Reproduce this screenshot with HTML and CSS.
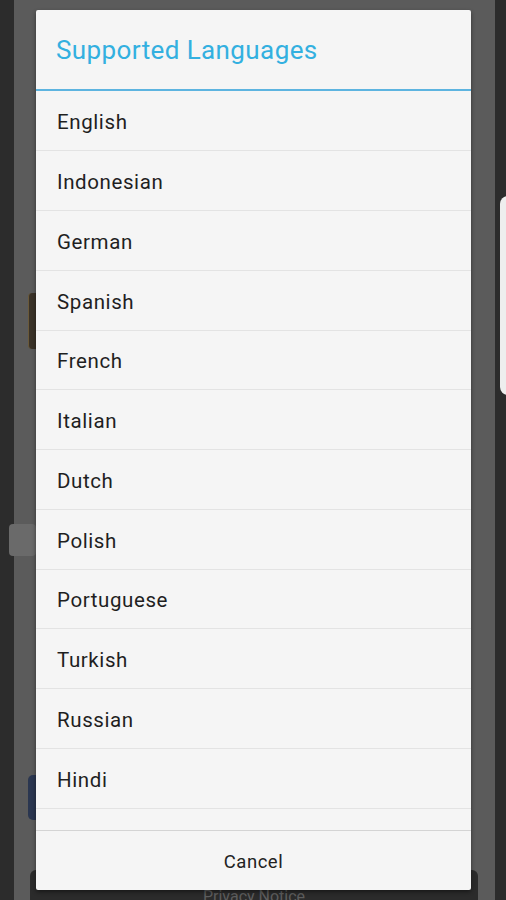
FILE: index.html
```html
<!DOCTYPE html>
<html>
<head>
<meta charset="utf-8">
<link rel="stylesheet" href="styles.css">
</head>
<body>
<div class="frame">
  <div class="screen">
    <div class="bg-bits">
      <span class="bit bit-orange"></span>
      <span class="bit bit-grey"></span>
      <span class="bit bit-blue"></span>
      <div class="bg-bottom"><span class="privacy">Privacy Notice</span></div>
    </div>
    <div class="dialog">
      <div class="title">Supported Languages</div>
      <div class="list">
        <div class="item">English</div>
        <div class="item">Indonesian</div>
        <div class="item">German</div>
        <div class="item">Spanish</div>
        <div class="item">French</div>
        <div class="item">Italian</div>
        <div class="item">Dutch</div>
        <div class="item">Polish</div>
        <div class="item">Portuguese</div>
        <div class="item">Turkish</div>
        <div class="item">Russian</div>
        <div class="item">Hindi</div>
        <div class="item">Chinese</div>
      </div>
      <div class="actions">Cancel</div>
    </div>
  </div>
  <div class="side"><span class="side-card"></span></div>
</div>
</body>
</html>
```
FILE: styles.css
```css
* { box-sizing: border-box; }
html, body { margin: 0; padding: 0; }
body {
  width: 506px;
  height: 900px;
  overflow: hidden;
  background: #2c2c2c;
  font-family: Roboto, "Liberation Sans", sans-serif;
}
.frame {
  display: flex;
  height: 900px;
  padding-left: 14px;
}
.screen {
  position: relative;
  width: 481px;
  height: 900px;
  background: #5b5b5b;
  padding: 10px 0 0 22px;
}
.side {
  position: relative;
  flex: 1;
}
.side-card {
  position: absolute;
  left: 5px;
  top: 196px;
  width: 20px;
  height: 199px;
  background: #eeeeee;
  border-radius: 8px;
}
.bit { position: absolute; }
.bit-orange {
  left: 14px; top: 293px; width: 8px; height: 56px;
  background: #3a3228; border-left: 1px solid #6b5a3a; border-radius: 4px 0 0 4px;
}
.bit-grey {
  left: -5px; top: 524px; width: 27px; height: 32px;
  background: #6a6a6a; border-radius: 4px;
}
.bit-blue {
  left: 14px; top: 775px; width: 10px; height: 45px;
  background: #2a3650; border-radius: 5px 0 0 5px;
}
.bg-bottom {
  position: absolute;
  left: 16px;
  right: 17px;
  top: 870px;
  height: 40px;
  background: #2b2b2b;
  border-radius: 6px;
  text-align: center;
}
.privacy {
  display: block;
  padding-top: 17px;
  font-size: 16px;
  color: #5e5e5e;
}
.dialog {
  position: relative;
  width: 435px;
  height: 880px;
  background: #f5f5f5;
  border-radius: 2px;
  box-shadow: 0 2px 4px rgba(0,0,0,0.45);
  display: flex;
  flex-direction: column;
}
.title {
  height: 81px;
  padding: 24px 0 0 20px;
  font-size: 26px;
  letter-spacing: 0.4px;
  color: #33b0e0;
  border-bottom: 2px solid #5db4e0;
  line-height: 32px;
}
.list {
  height: 739px;
  overflow: hidden;
  padding-top: 0.5px;
}
.item {
  height: 59.75px;
  display: flex;
  align-items: center;
  padding-left: 21px;
  padding-top: 3px;
  font-size: 20.5px;
  letter-spacing: 0.6px;
  color: #1f1f1f;
  border-bottom: 1px solid #e3e3e3;
}
.actions {
  flex: 1;
  display: flex;
  align-items: center;
  justify-content: center;
  padding-top: 2px;
  font-size: 18.5px;
  letter-spacing: 0.5px;
  color: #222222;
  border-top: 1px solid #d4d4d4;
}
```
